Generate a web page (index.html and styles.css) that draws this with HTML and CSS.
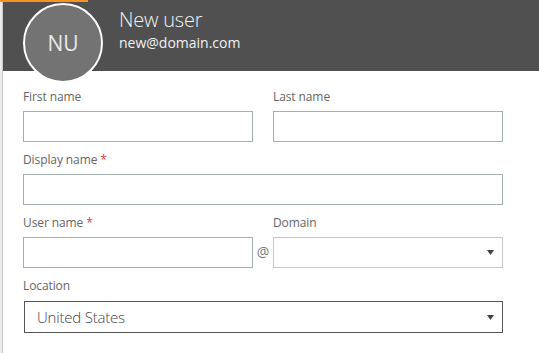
FILE: index.html
```html
<!DOCTYPE html>
<html lang="en">
<head>
  <meta charset="UTF-8">
  <meta name="viewport" content="width=device-width, initial-scale=1.0">
  <title>New user</title>
  <link rel="stylesheet" href="styles.css">
</head>
<body>
  <div class="page">
    <div class="edge"></div>

    <div class="panel">
      <div class="tab-mark"></div>

      <header class="head">
        <div class="avatar">NU</div>
        <div class="who">
          <div class="who-name">New user</div>
          <div class="who-mail">new@domain.com</div>
        </div>
      </header>

      <form class="user-form">
        <div class="field col-left">
          <label for="first">First name</label>
          <input class="text-box" type="text" id="first">
        </div>
        <div class="field col-right">
          <label for="last">Last name</label>
          <input class="text-box" type="text" id="last">
        </div>

        <div class="field col-wide">
          <label for="display">Display name <span class="req">*</span></label>
          <input class="text-box" type="text" id="display">
        </div>

        <div class="field col-left">
          <label for="uname">User name <span class="req">*</span></label>
          <input class="text-box" type="text" id="uname">
        </div>
        <div class="at">@</div>
        <div class="field col-right">
          <label>Domain</label>
          <div class="drop drop-light">
            <span class="drop-value"></span>
            <svg class="drop-arrow" width="7" height="5" viewBox="0 0 7 5"><polygon points="0,0 7,0 3.5,5" fill="#444"/></svg>
          </div>
        </div>

        <div class="field col-wide">
          <label>Location</label>
          <div class="drop drop-dark">
            <span class="drop-value">United States</span>
            <svg class="drop-arrow" width="7" height="5" viewBox="0 0 7 5"><polygon points="0,0 7,0 3.5,5" fill="#444"/></svg>
          </div>
        </div>
      </form>
    </div>
  </div>
</body>
</html>
```

FILE: styles.css
```css
body {
  margin: 0;
  padding: 0;
  background-color: #ffffff;
  font-family: 'Segoe UI', 'Open Sans', sans-serif;
}

.page {
  display: flex;
  height: 353px;
  overflow: hidden;
}

.edge {
  width: 2px;
  flex-shrink: 0;
  background-color: #ececec;
  border-right: 1px solid #c9c9c9;
}

.panel {
  position: relative;
  flex: 1;
}

/* bit of the tab behind the panel */
.tab-mark {
  position: absolute;
  top: 0;
  left: -3px;
  width: 88px;
  height: 2px;
  background-color: #f7931e;
}

.head {
  display: flex;
  align-items: flex-start;
  gap: 16px;
  height: 71px;
  padding-left: 20px;
  background-color: #505050;
  box-sizing: border-box;
}

.avatar {
  width: 80px;
  height: 80px;
  margin-top: 3px;
  flex-shrink: 0;
  display: flex;
  align-items: center;
  justify-content: center;
  border: 2px solid #ffffff;
  border-radius: 50%;
  background-color: #737373;
  color: #e8e8e8;
  font-size: 21px;
  box-sizing: border-box;
  position: relative;
  z-index: 1;
}

.who {
  padding-top: 7px;
  color: #f2f2f2;
}

.who-name {
  font-size: 20px;
  font-weight: 300;
  line-height: 26px;
  letter-spacing: -0.2px;
}

.who-mail {
  font-size: 14px;
  line-height: 20px;
}

.user-form {
  display: grid;
  grid-template-columns: 230px 20px 230px;
  row-gap: 10px;
  padding: 18px 0 0 20px;
}

.field {
  display: flex;
  flex-direction: column;
}

.col-left {
  grid-column: 1;
}

.col-right {
  grid-column: 3;
}

.col-wide {
  grid-column: 1 / -1;
}

label {
  font-size: 12px;
  line-height: 16px;
  color: #666666;
  margin-bottom: 6px;
  letter-spacing: -0.1px;
}

.req {
  color: #d83b3b;
}

.text-box {
  height: 31px;
  margin: 0;
  padding: 0 8px;
  border: 1px solid #a3b0ae;
  border-radius: 0;
  font-size: 14px;
  box-sizing: border-box;
}

.at {
  grid-column: 2;
  align-self: end;
  height: 31px;
  line-height: 29px;
  text-align: center;
  font-size: 14px;
  color: #777777;
}

.drop {
  display: flex;
  align-items: center;
  justify-content: space-between;
  height: 31px;
  padding: 0 8px 0 12px;
  box-sizing: border-box;
}

.drop-light {
  border: 1px solid #c8c8c8;
}

.drop-dark {
  height: 32px;
  margin-top: 1px;
  margin-left: 1px;
  border: 1px solid #555555;
}

.drop-value {
  font-size: 15px;
  font-weight: 300;
  letter-spacing: -0.2px;
  color: #444444;
}
```
